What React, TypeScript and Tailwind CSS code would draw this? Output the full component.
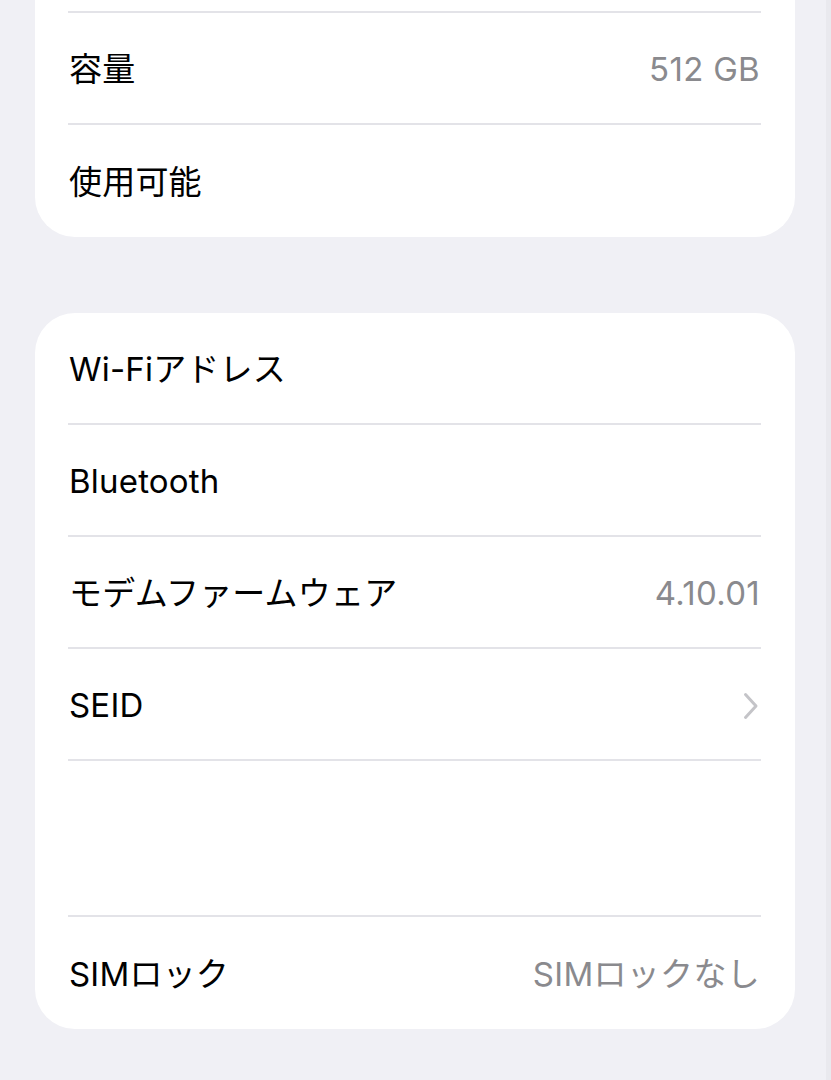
import React from "react";

const font = { fontFamily: '"Inter", "Noto Sans CJK JP", sans-serif' };

function Divider() {
  return <div className="ml-[33px] mr-[34px] h-[2px] bg-[#e3e3e8]" />;
}

function Row({ label, value, chevron, tall }: { label: string; value?: string; chevron?: boolean; tall?: boolean }) {
  return (
    <div className={`flex ${tall ? "h-[112px]" : "h-[110px]"} items-center justify-between pl-[34px] pr-[35px] pt-[3px]`}>
      <span className="text-[33px] leading-none tracking-[0.2px] text-black">{label}</span>
      {value && <span className="text-[33px] leading-none tracking-[0.3px] text-[#8a8a8e]">{value}</span>}
      {chevron && (
        <svg width="16" height="28" viewBox="0 0 16 28" fill="none" className="mr-[1px]">
          <path d="M2.5 2.5 L13 14 L2.5 25.5" stroke="#c4c4c8" strokeWidth="3" strokeLinecap="round" strokeLinejoin="round" />
        </svg>
      )}
    </div>
  );
}

export default function App() {
  return (
    <div className="relative min-h-[1080px] w-[831px] overflow-hidden bg-[#f0f0f5]" style={font}>
      <div className="ml-[35px] mr-[36px] rounded-b-[40px] bg-white">
        <div className="h-[11px]" />
        <Divider />
        <Row label="容量" value="512 GB" />
        <Divider />
        <Row label="使用可能" tall />
      </div>

      <div className="ml-[35px] mr-[36px] mt-[76px] rounded-[40px] bg-white">
        <Row label="Wi-Fiアドレス" />
        <Divider />
        <Row label="Bluetooth" />
        <Divider />
        <Row label="モデムファームウェア" value="4.10.01" />
        <Divider />
        <Row label="SEID" chevron />
        <Divider />
        <div className="h-[154px]" />
        <Divider />
        <Row label="SIMロック" value="SIMロックなし" tall />
      </div>
      <div className="absolute right-0 top-0 h-full w-[5px] bg-[#e9e9ee]" />
    </div>
  );
}
